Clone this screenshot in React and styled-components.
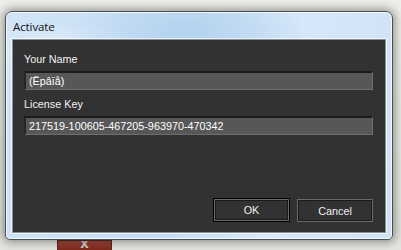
import React, { useState } from "react";
import styled, { createGlobalStyle } from "styled-components";

const GlobalStyle = createGlobalStyle`
  html, body {
    margin: 0;
    padding: 0;
    background: #e6e6e0;
    overflow: hidden;
  }
`;

const Desktop = styled.div`
  width: 401px;
  height: 250px;
  display: flex;
  flex-direction: column;
  padding: 11px 0 0 5px;
  box-sizing: border-box;
  background: linear-gradient(#efefea, #e4e4de);
  position: relative;
`;

const Window = styled.div`
  width: 388px;
  height: 231px;
  box-sizing: border-box;
  border: 1px solid #4a4f55;
  border-radius: 7px 7px 5px 5px;
  background: radial-gradient(ellipse 120px 40px at 180px 20px, #b4d3ef, transparent),
    radial-gradient(ellipse 90px 30px at 60px 40px, #e2eefa, transparent),
    linear-gradient(100deg, #d2e5f7 0%, #c4dcf3 45%, #d6e8f9 70%, #cfe3f6 100%);
  box-shadow: 0 0 10px 2px rgba(0, 0, 0, 0.4), inset 0 0 0 1px rgba(255, 255, 255, 0.7);
  display: flex;
  flex-direction: column;
  padding: 0 6px 6px 6px;
  position: relative;
  z-index: 1;
`;

const TitleBar = styled.div`
  height: 27px;
  display: flex;
  align-items: center;
  padding-left: 1px;
  padding-top: 2px;
  box-sizing: border-box;
  font-family: "Open Sans", "DejaVu Sans", sans-serif;
  font-size: 11.5px;
  color: #111;
  letter-spacing: -0.1px;
`;

const Panel = styled.div`
  flex: 1;
  background: #323232;
  border: 1px solid #8a9096;
  outline: 1px solid rgba(255, 255, 255, 0.6);
  display: flex;
  flex-direction: column;
  padding: 11px 11px 10px 11px;
  font-family: "Liberation Sans", "DejaVu Sans", sans-serif;
  font-size: 10.8px;
  color: #f2f2f2;
`;

const Label = styled.div`
  height: 16px;
  display: flex;
  align-items: center;
  margin-bottom: ${(p) => p.gap || 0}px;
`;

const Field = styled.input`
  height: 19px;
  width: 349px;
  box-sizing: border-box;
  background: #575757;
  border-top: 2px solid #1c1c1c;
  border-left: 2px solid #262626;
  border-right: 1px solid #6e6e6e;
  border-bottom: 1px solid #6e6e6e;
  padding: 0 0 0 3px;
  margin: 0 0 ${(p) => p.after || 0}px 0;
  color: #ffffff;
  font-family: "Liberation Sans", "DejaVu Sans", sans-serif;
  font-size: 10.8px;
  outline: none;
`;

const Buttons = styled.div`
  margin-top: auto;
  display: flex;
  justify-content: flex-end;
  gap: 7px;
  padding-right: 1px;
`;

const Button = styled.button`
  width: ${(p) => (p.primary ? 77 : 76)}px;
  height: ${(p) => (p.primary ? 24 : 23)}px;
  box-sizing: border-box;
  background: #323232;
  color: #f0f0f0;
  font-family: "Liberation Sans", "DejaVu Sans", sans-serif;
  font-size: 10.8px;
  border: 1px solid ${(p) => (p.primary ? "#000" : "#6a6a6a")};
  box-shadow: ${(p) =>
    p.primary ? "inset 0 0 0 1px #6a6a6a, inset 0 0 0 2px #1a1a1a" : "inset 0 0 0 1px #1a1a1a"};
  padding: 0;
  margin-top: ${(p) => (p.primary ? 0 : 1)}px;
  cursor: pointer;
`;

const Behind = styled.div`
  display: flex;
  padding-left: 52px;
  height: 10px;
`;

const CloseBtn = styled.div`
  width: 53px;
  height: 10px;
  background: linear-gradient(#a34a3a, #7a2418);
  border: 1px solid #5a2a22;
  border-bottom: none;
  display: flex;
  justify-content: center;
  align-items: flex-start;
  color: #d0d0d0;
  font-family: "DejaVu Sans", sans-serif;
  font-size: 11px;
  font-weight: bold;
  line-height: 8px;
  overflow: hidden;
`;

export default function App() {
  const [name, setName] = useState("(Ëpâïå)");
  const [key, setKey] = useState("217519-100605-467205-963970-470342");

  return (
    <>
      <GlobalStyle />
      <Desktop>
        <Window>
          <TitleBar>Activate</TitleBar>
          <Panel>
            <Label gap={4}>Your Name</Label>
            <Field value={name} onChange={(e) => setName(e.target.value)} after={6} />
            <Label gap={4}>License Key</Label>
            <Field value={key} onChange={(e) => setKey(e.target.value)} />
            <Buttons>
              <Button primary>OK</Button>
              <Button>Cancel</Button>
            </Buttons>
          </Panel>
        </Window>
        <Behind>
          <CloseBtn>X</CloseBtn>
        </Behind>
      </Desktop>
    </>
  );
}
